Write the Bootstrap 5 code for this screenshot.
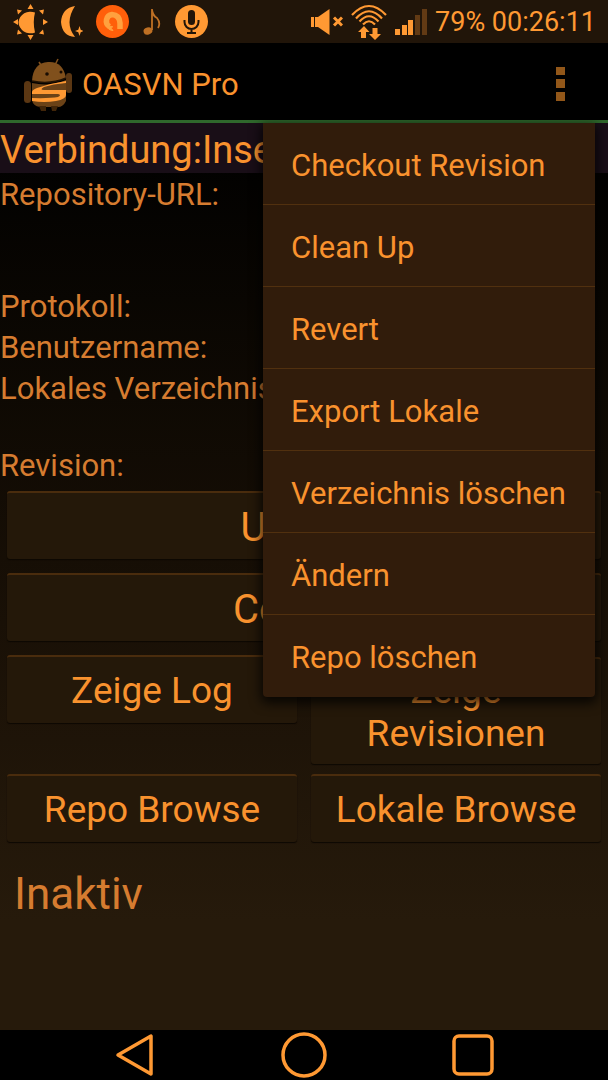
<!DOCTYPE html>
<html lang="de">
<head>
<meta charset="utf-8">
<meta name="viewport" content="width=device-width, initial-scale=1">
<title>OASVN Pro</title>
<link rel="stylesheet" href="https://cdn.jsdelivr.net/npm/bootstrap@5.3.0/dist/css/bootstrap.min.css">
<style>
:root { --amber: #ff9933; --amber-text: #f9922e; --amber-dim: #d67c30; }
body { font-family: Roboto, "Liberation Sans", sans-serif; color: var(--amber-text); background: #000; }
.status-bar { background: #211509; height: 43px; color: var(--amber); font-size: 27px; line-height: 43px; padding: 0 12px; }
.status-icons { gap: 13px; }
.clock { padding-top: 2px; }
.app-bar { height: 80px; border-bottom: 3px solid #2f682c; padding: 4px 24px 0; font-size: 31px; line-height: 36px; }
.app-title { margin-left: 10px; padding-top: 2px; }
.overflow-btn { width: 48px; height: 56px; }
.screen { background: linear-gradient(#000 0, #0e0903 30%, #191006 55%, #261a0b 88%, #261a0b 100%); }
.connection { background: #190e17; font-size: 38px; line-height: 46px; padding-top: 4px; }
.details { color: var(--amber-dim); font-size: 31px; line-height: 36px; }
.details th, .details td { font-weight: 400; padding: 4px 0 1px; vertical-align: top; white-space: nowrap; }
.details .two-lines { height: 77px; }
.details .three-lines { height: 112px; }
.actions { padding: 6px 7px 0; row-gap: 10px; column-gap: 14px; display: grid; grid-template-columns: 1fr 1fr; align-items: baseline; }
.action-btn { background: #241809; color: var(--amber-text); border: 0; border-top: 2px solid #4a2c0d; border-radius: 3px; box-shadow: 0 1px 1px #0d0803; font-size: 37px; line-height: 43px; padding: 10px 20px 9px; min-height: 68px; }
.action-btn:hover { background: #33210d; color: var(--amber); }
.action-btn.wide { grid-column: 1 / -1; margin-bottom: 4px; font-size: 40px; padding: 12px 20px 9px; }
.state-text { color: var(--amber-dim); font-size: 44px; line-height: 52px; padding: 26px 14px; }
.context-menu { top: 123px; right: 13px; width: 332px; z-index: 10; background: #311c0b; border: 0; border-radius: 0 0 4px 4px; padding: 0; box-shadow: 0 4px 12px 2px #000c; }
.context-menu .dropdown-item { color: var(--amber-text); font-size: 31px; line-height: 36px; height: 82px; padding: 4px 28px 0; border-bottom: 1px solid #51300f; }
.context-menu .dropdown-item:hover { background: #4a2c10; }
.context-menu li:last-child .dropdown-item { border-bottom: 0; }
.system-nav { height: 50px; background: #000; padding: 0 51px; }
.system-nav .btn { width: 33.333%; }
</style>
</head>
<body>
<div class="position-relative d-flex flex-column min-vh-100 overflow-hidden">

<header class="status-bar d-flex align-items-center justify-content-between">
  <div class="status-icons d-flex align-items-center">
    <svg width="36" height="36" viewBox="0 0 36 36" fill="#ff9933"><path d="M23 8.500A12 11.500 0 0 0 6.500 18A12 11.500 0 0 0 23 28.500Q20.500 18 23 8.500Z"/><path d="M15.500 5l3-5 3 5zM15.500 31l3 5 3-5zM6 15v6l-5-3zM31 15v6l5-3zM6 10.500l4-4-5-1zM6 25.500l4 4-5 1zM27 6.500l4 4 1-5zM27 29.500l4-4 1 5z"/></svg>
    <svg width="22" height="32" viewBox="0 0 22 32" fill="#ff9933"><path d="M14 0Q1 2 0 16q1 14 14 15Q3 17 14 0ZM18.500 20l1.200 3.800L23 25l-3.300 1.200L18.500 30l-1.200-3.800L14 25l3.300-1.200Z"/></svg>
    <svg width="33" height="33" viewBox="0 0 33 33"><circle cx="16.500" cy="16.500" r="16.500" fill="#ff5f0a"/><path d="M13.500 21.500A6.500 6.500 0 0 1 16 9.500q7.500.5 8 8.500v6" fill="none" stroke="#ffa13e" stroke-width="5.500"/><path d="M11 21a7 5 0 0 0 6 4.500q-3-2-.5-4z" fill="#ffa13e" stroke="#ffa13e"/></svg>
    <svg width="20" height="28" viewBox="-1 0 20 28"><path d="M9 1v21M9 2q1 6 5 8 4 5 1 10" fill="none" stroke="#bf7024" stroke-width="1.800"/><ellipse cx="5" cy="23" rx="4.500" ry="3.500" fill="#bf7024" transform="rotate(-15 5 23)"/></svg>
    <svg width="33" height="33" viewBox="0 0 33 33"><circle cx="16.500" cy="16.500" r="16.500" fill="#ff9933"/><rect x="13" y="5" width="7" height="15" rx="3.500" fill="#211509"/><path d="M9.500 15v2a7 7 0 0 0 14 0v-2M16.500 24v4M12 28h9" fill="none" stroke="#211509" stroke-width="2"/></svg>
  </div>
  <div class="d-flex align-items-center">
    <svg width="32" height="28" viewBox="0 0 32 28" fill="#ff9933" class="me-2"><path d="M0 9h3v10H0zM4 9h3L18.500 1v26L7 19H4z"/><path d="M23 9.500l8 8M31 9.500l-8 8" stroke="#ff9933" stroke-width="3"/></svg>
    <svg width="36" height="36" viewBox="0 0 36 36" fill="none" stroke="#ff9933" class="me-2"><path d="M1 11Q18-7 35 11M5 14.500Q18 0 31 14.500M8.500 17.500Q18 7 27.500 17.500M12 20.500Q18 14 24 20.500" stroke-width="2.200"/><path d="M13 22l5.500 6H15v6h-5v-6H7zM24 36l-6-6h3.500v-6h5v6H30z" fill="#ff9933" stroke="none"/></svg>
    <svg width="32" height="26" viewBox="0 0 32 26" class="me-2"><path d="M0 20h5v6H0zM7 16h5v10H7zM13 11h5v15h-5z" fill="#ff9933"/><path d="M20 6h5v20h-5zM27 0h5v26h-5z" fill="#623a14"/></svg>
    <span class="clock">79% 00:26:11</span>
  </div>
</header>

<nav class="app-bar d-flex align-items-center">
  <svg width="48" height="54" viewBox="0 0 48 54" class="flex-shrink-0"><g fill="#80501c"><path d="M15 5l3 5M34 2l-3 6" stroke="#80501c" stroke-width="1.600"/><path d="M8 24Q9 6 24 5t18 16q-17 7-34 3z"/><path d="M8 26q18 4 34-3v21q-3 6-8 6H16q-7-1-8-7z" fill="#6b4217"/><rect x="0" y="24" width="7" height="22" rx="3.500" fill="#5b3713"/><rect x="42" y="16" width="6" height="20" rx="3" fill="#5b3713"/><path d="M15 49h7v5h-5zM27 49h7l-2 5h-4z" fill="#422609"/></g><path d="M8 24q18 4 34-3" fill="none" stroke="#201204" stroke-width="1.500"/><circle cx="23" cy="17" r="1.800" fill="#190d03"/><circle cx="37" cy="15" r="1.500" fill="#190d03"/><path d="M42 24Q28 26 13 31q-5 2-5 4v2h26q4 1 0 3-8 1.500-26 1v3q12 2 24 0 10-2 10-6v-5H20q-5 0 0-3 9-3 22-4z" fill="#ff9933"/></svg>
  <span class="app-title me-auto">OASVN Pro</span>
  <button class="btn p-0 overflow-btn" type="button" aria-label="Menü" aria-expanded="true"><svg width="9" height="34" viewBox="0 0 9 34" fill="#925719"><path d="M0 0h9v8H0zM0 12h9v9H0zM0 25h9v9H0z"/></svg></button>
</nav>

<main class="screen flex-grow-1">
  <h1 class="connection fw-normal m-0 text-nowrap overflow-hidden">Verbindung:Inse</h1>
  <table class="details w-100">
    <tr class="three-lines"><th scope="row">Repository-URL:</th><td></td></tr>
    <tr><th scope="row">Protokoll:</th><td></td></tr>
    <tr><th scope="row">Benutzername:</th><td></td></tr>
    <tr class="two-lines"><th scope="row">Lokales Verzeichnis:</th><td></td></tr>
    <tr><th scope="row">Revision:</th><td></td></tr>
  </table>
  <div class="actions">
    <button class="btn action-btn wide" type="button">Update</button>
    <button class="btn action-btn wide" type="button">Commit</button>
    <button class="btn action-btn" type="button">Zeige Log</button>
    <button class="btn action-btn" type="button">Zeige Revisionen</button>
    <button class="btn action-btn" type="button">Repo Browse</button>
    <button class="btn action-btn" type="button">Lokale Browse</button>
  </div>
  <p class="state-text m-0">Inaktiv</p>
</main>

<ul class="dropdown-menu show context-menu">
  <li><button class="dropdown-item" type="button">Checkout Revision</button></li>
  <li><button class="dropdown-item" type="button">Clean Up</button></li>
  <li><button class="dropdown-item" type="button">Revert</button></li>
  <li><button class="dropdown-item" type="button">Export Lokale</button></li>
  <li><button class="dropdown-item" type="button">Verzeichnis löschen</button></li>
  <li><button class="dropdown-item" type="button">Ändern</button></li>
  <li><button class="dropdown-item" type="button">Repo löschen</button></li>
</ul>

<footer class="system-nav d-flex justify-content-center align-items-center">
  <button class="btn p-0" type="button" aria-label="Zurück"><svg width="40" height="44" viewBox="0 0 40 44" fill="none" stroke="#ff9933" stroke-width="3.500" stroke-linejoin="round"><path d="M36 3v38L3 22z"/></svg></button>
  <button class="btn p-0" type="button" aria-label="Startseite"><svg width="46" height="46" viewBox="0 0 46 46" fill="none" stroke="#ff9933" stroke-width="3.500"><circle cx="23" cy="23" r="21"/></svg></button>
  <button class="btn p-0" type="button" aria-label="Letzte Apps"><svg width="42" height="42" viewBox="0 0 42 42" fill="none" stroke="#ff9933" stroke-width="3.500"><rect x="2" y="2" width="38" height="38" rx="5"/></svg></button>
</footer>
</div>
<script src="https://cdn.jsdelivr.net/npm/bootstrap@5.3.0/dist/js/bootstrap.bundle.min.js"></script>
</body>
</html>
